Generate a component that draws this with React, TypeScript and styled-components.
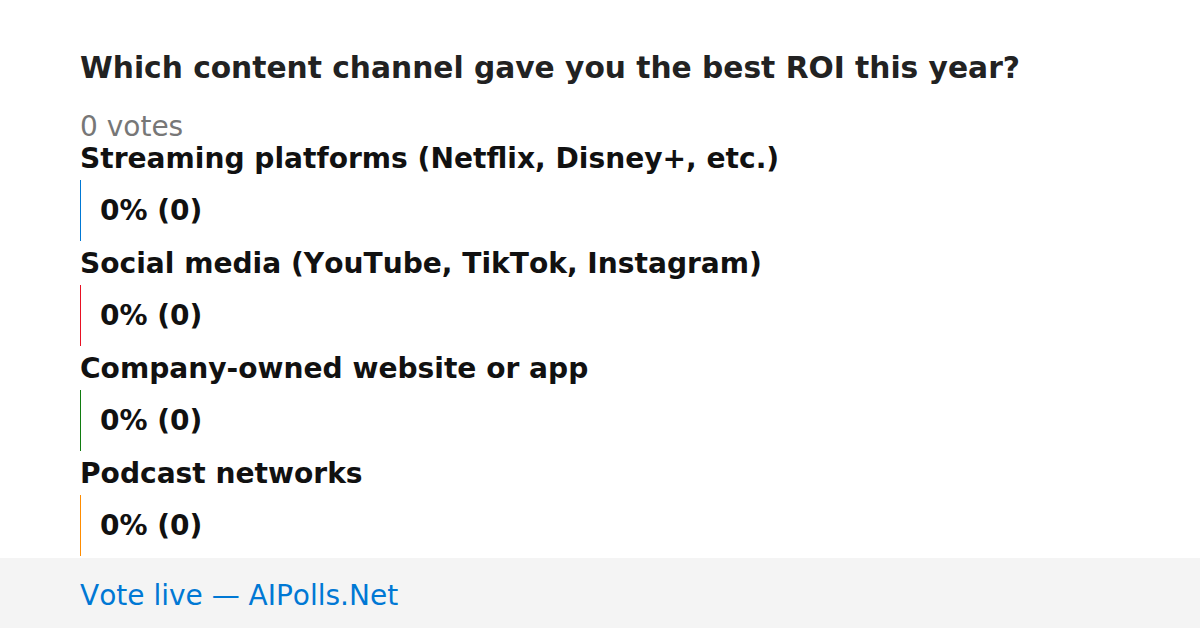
import React from "react";
import styled, { createGlobalStyle } from "styled-components";

const Global = createGlobalStyle`
  html, body { margin: 0; padding: 0; background: #ffffff; }
  body {
    font-family: "DejaVu Sans", "Liberation Sans", sans-serif;
    font-kerning: none;
  }
`;

const Page = styled.div`
  width: 1200px;
  height: 628px;
  display: flex;
  flex-direction: column;
  overflow: hidden;
`;

const Main = styled.main`
  flex: 1;
  min-height: 0;
  padding: 50px 80px 0;
  display: flex;
  flex-direction: column;
`;

const Title = styled.h1`
  margin: 0;
  font-size: 29.7px;
  line-height: 35px;
  font-weight: bold;
  color: #222222;
`;

const Votes = styled.div`
  margin-top: 26px;
  font-size: 28px;
  line-height: 32px;
  color: #777777;
`;

const Option = styled.section`
  display: flex;
  flex-direction: column;
  & + & {
    margin-top: 7px;
  }
`;

const Label = styled.div`
  font-size: 28.1px;
  line-height: 32px;
  font-weight: bold;
  color: #111111;
  margin-bottom: 5px;
`;

const Bar = styled.div<{ $color: string }>`
  border-left: 1px solid ${(p) => p.$color};
  height: 61px;
  display: flex;
  align-items: center;
  padding-left: 19px;
  font-size: 28px;
  font-weight: bold;
  color: #111111;
`;

const Footer = styled.footer`
  flex-shrink: 0;
  height: 70px;
  background: #f4f4f4;
  display: flex;
  align-items: center;
  padding: 4px 80px 0;
  box-sizing: border-box;
  font-size: 28px;
  color: #0078d4;
`;

const options = [
  { label: "Streaming platforms (Netflix, Disney+, etc.)", color: "#0078d4" },
  { label: "Social media (YouTube, TikTok, Instagram)", color: "#e81123" },
  { label: "Company-owned website or app", color: "#107c10" },
  { label: "Podcast networks", color: "#ff8c00" },
];

export default function App() {
  return (
    <Page>
      <Global />
      <Main>
        <Title>Which content channel gave you the best ROI this year?</Title>
        <Votes>0 votes</Votes>
        {options.map((o) => (
          <Option key={o.label}>
            <Label>{o.label}</Label>
            <Bar $color={o.color}>0% (0)</Bar>
          </Option>
        ))}
      </Main>
      <Footer>Vote live — AIPolls.Net</Footer>
    </Page>
  );
}
